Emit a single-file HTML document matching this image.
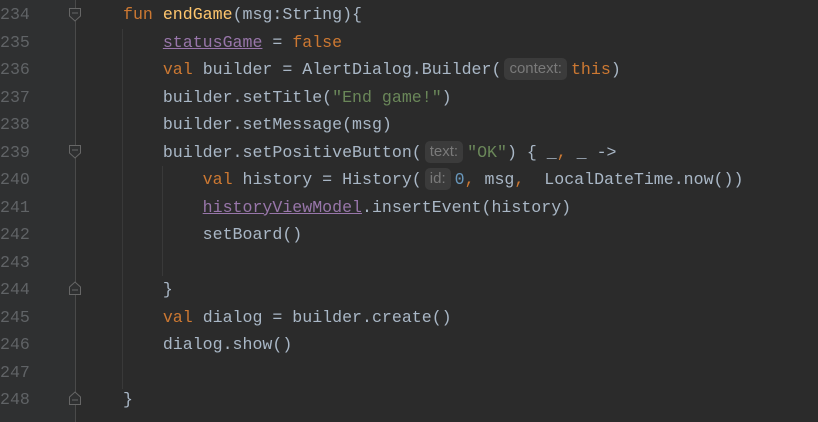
<!DOCTYPE html>
<html><head><style>
body{margin:0;width:818px;height:422px;background:#2b2b2b;overflow:hidden;position:relative;font-family:"Liberation Mono","DejaVu Sans Mono",monospace;}
.g{position:absolute;left:0;top:0;width:75px;height:422px;background:#2f3031;}
.gl{position:absolute;left:75px;top:0;width:1px;height:422px;background:#4a4a4a;}
.ln{position:absolute;left:0;width:28px;text-align:right;color:#606366;font-size:16.6px;height:27.5px;line-height:27.5px;}
.c{position:absolute;left:123px;white-space:pre;color:#a9b7c6;font-size:16.6px;height:27.5px;line-height:27.5px;}
.k{color:#cc7832}.f{color:#ffc66d}.s{color:#6a8759}.p{color:#9876aa;text-decoration:underline}.n{color:#6897bb}
.h{display:inline-block;background:#3b3b3b;color:#7a7a7a;font-family:"Liberation Sans",sans-serif;font-size:15px;line-height:22px;padding:0 5px;border-radius:5px;margin:0 4px 0 3px;vertical-align:1px}
.ig{position:absolute;width:1px;background:#393939}
.fold{position:absolute;left:68px;width:14px;height:15px}
</style></head><body>
<div class="g"></div><div class="gl"></div>
<div class="ig" style="left:122px;top:29px;height:360px"></div>
<div class="ig" style="left:162px;top:166px;height:110px"></div>
<svg class="fold" style="top:7px" viewBox="0 0 14 15"><path d="M1.5 1.5H12.5V9L7 14L1.5 9Z" fill="#2f3031" stroke="#666" /><path d="M4 6H10" stroke="#666"/></svg>
<svg class="fold" style="top:144px" viewBox="0 0 14 15"><path d="M1.5 1.5H12.5V9L7 14L1.5 9Z" fill="#2f3031" stroke="#666" /><path d="M4 6H10" stroke="#666"/></svg>
<svg class="fold" style="top:281px" viewBox="0 0 14 15"><path d="M1.5 13.5H12.5V6L7 1L1.5 6Z" fill="#2f3031" stroke="#666" /><path d="M4 9H10" stroke="#666"/></svg>
<svg class="fold" style="top:391px" viewBox="0 0 14 15"><path d="M1.5 13.5H12.5V6L7 1L1.5 6Z" fill="#2f3031" stroke="#666" /><path d="M4 9H10" stroke="#666"/></svg>

<div class="ln" style="top:1px">234</div>
<div class="ln" style="top:28.5px">235</div>
<div class="ln" style="top:56px">236</div>
<div class="ln" style="top:83.5px">237</div>
<div class="ln" style="top:111px">238</div>
<div class="ln" style="top:138.5px">239</div>
<div class="ln" style="top:166px">240</div>
<div class="ln" style="top:193.5px">241</div>
<div class="ln" style="top:221px">242</div>
<div class="ln" style="top:248.5px">243</div>
<div class="ln" style="top:276px">244</div>
<div class="ln" style="top:303.5px">245</div>
<div class="ln" style="top:331px">246</div>
<div class="ln" style="top:358.5px">247</div>
<div class="ln" style="top:386px">248</div>

<div class="c" style="top:1px"><span class="k">fun </span><span class="f">endGame</span>(msg:String){</div>
<div class="c" style="top:28.5px">    <span class="p">statusGame</span> = <span class="k">false</span></div>
<div class="c" style="top:56px">    <span class="k">val </span>builder = AlertDialog.Builder(<span class="h">context:</span><span class="k">this</span>)</div>
<div class="c" style="top:83.5px">    builder.setTitle(<span class="s">"End game!"</span>)</div>
<div class="c" style="top:111px">    builder.setMessage(msg)</div>
<div class="c" style="top:138.5px">    builder.setPositiveButton(<span class="h">text:</span><span class="s">"OK"</span>) { _<span class="k">,</span> _ -&gt;</div>
<div class="c" style="top:166px">        <span class="k">val </span>history = History(<span class="h">id:</span><span class="n">0</span><span class="k">,</span> msg<span class="k">,</span>  LocalDateTime.now())</div>
<div class="c" style="top:193.5px">        <span class="p">historyViewModel</span>.insertEvent(history)</div>
<div class="c" style="top:221px">        setBoard()</div>
<div class="c" style="top:276px">    }</div>
<div class="c" style="top:303.5px">    <span class="k">val </span>dialog = builder.create()</div>
<div class="c" style="top:331px">    dialog.show()</div>
<div class="c" style="top:386px">}</div>
</body></html>
